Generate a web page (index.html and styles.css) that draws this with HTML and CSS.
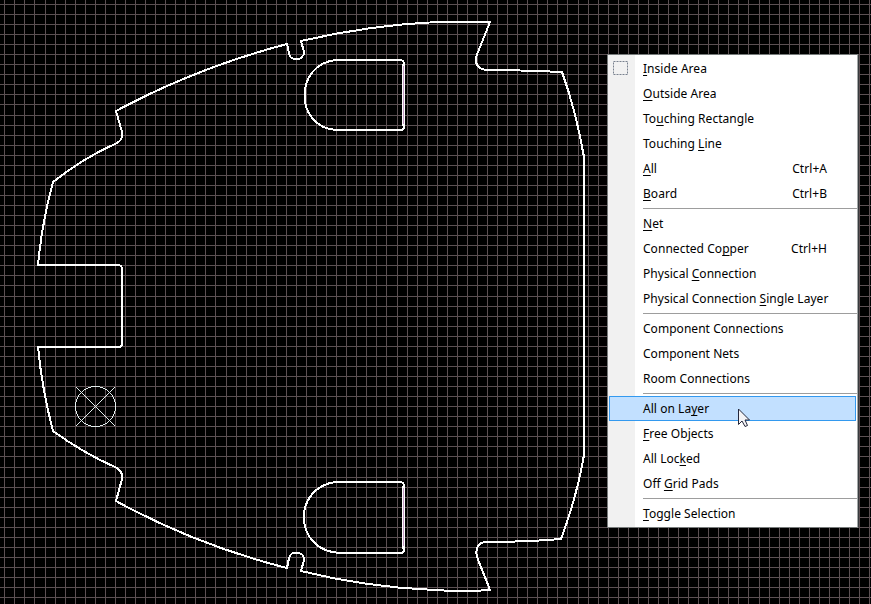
FILE: index.html
```html
<!DOCTYPE html>
<html lang="en">
<head>
<meta charset="utf-8">
<title>PCB Editor</title>
<link rel="stylesheet" href="styles.css">
</head>
<body>
<main class="workspace">
<svg class="board" width="871" height="604" viewBox="0 0 871 604" shape-rendering="crispEdges">
<path id="grid" class="grid"/>
<path class="outline" d="M490 22H437Q370 25 301 41L304 52C304 61 290 62 289 53L287 44Q196 68 116 111L122 132Q123 140 117 143Q83 158 53 182Q42 222 38 265H118Q122 265 122 269V343Q122 347 118 347H38Q42 389 53 431Q83 453 117 468Q123 472 122 479L116 501Q196 545 287 568L289 558C291 550 304 551 304 560L301 571Q365 587 434 590Q465 592 490 590L477 557Q474 543 486 542Q526 542 561 539Q577 496 584 455V157Q576 111 562 72Q521 70 485 70Q474 67 476 57Z"/>
<path class="outline" d="M336 60H400Q404 60 404 64V126Q404 130 400 130H336C294 127 294 64 336 60ZM336 482H400Q404 482 404 486V549Q404 553 400 553H340C293 551 292 487 336 482Z"/>
<path class="slot-edge" d="M402.500 64V126M402.500 486V549"/>
<path class="slot" d="M403.500 66V124M403.500 488V546"/>
<g class="origin"><circle cx="95.500" cy="406.500" r="20"/><path d="M76 387L115 426M115 387L76 426"/></g>
</svg>
<nav class="menu">
<div class="item"><svg class="area" width="15" height="14" viewBox="0 0 15 14"><rect x=".5" y=".5" width="14" height="13"/></svg><span><u>I</u>nside Area</span></div>
<div class="item"><span><u>O</u>utside Area</span></div>
<div class="item"><span>To<u>u</u>ching Rectangle</span></div>
<div class="item"><span>Touching <u>L</u>ine</span></div>
<div class="item"><span><u>A</u>ll</span><kbd>Ctrl+A</kbd></div>
<div class="item"><span><u>B</u>oard</span><kbd>Ctrl+B</kbd></div>
<hr>
<div class="item"><span><u>N</u>et</span></div>
<div class="item"><span>Connected Co<u>p</u>per</span><kbd>Ctrl+H</kbd></div>
<div class="item"><span>Physical <u>C</u>onnection</span></div>
<div class="item"><span>Physical Connection <u>S</u>ingle Layer</span></div>
<hr>
<div class="item"><span>Component Connections</span></div>
<div class="item"><span>Component Nets</span></div>
<div class="item"><span>Room Connections</span></div>
<hr>
<div class="item selected"><span>All on La<u>y</u>er</span></div>
<div class="item"><span><u>F</u>ree Objects</span></div>
<div class="item"><span>All Loc<u>k</u>ed</span></div>
<div class="item"><span>Off <u>G</u>rid Pads</span></div>
<hr>
<div class="item"><span><u>T</u>oggle Selection</span></div>
</nav>
<svg class="pointer" width="13" height="20" viewBox="0 0 13 20"><path d="M.5 1V16.500L4 13L7 18.500L9.500 17.500L7 12H11.500Z"/></svg>
</main>
<script src="grid.js"></script>
</body>
</html>
```
FILE: grid.js
```
const pitch = 10.057;
let lines = "";
for (let i = 0; i < 87; i++) {
  const x = Math.floor(4.78 + i * pitch) + 0.5;
  lines += `M${x} 0V604`;
}
for (let i = 0; i < 60; i++) {
  const y = Math.floor(4.385 + i * pitch) + 0.5;
  lines += `M0 ${y}H871`;
}
document.getElementById("grid").setAttribute("d", lines);
```
FILE: styles.css
```css
* { box-sizing: border-box; }
body { margin: 0; background: #000; overflow: hidden; }
.workspace { position: relative; width: 871px; height: 604px; }
.board { display: block; }
.grid { stroke: #5c5053; fill: none; }
.outline { stroke: #fff; stroke-width: 2; fill: none; }
.slot-edge { stroke: #fff; fill: none; }
.slot { stroke: #c69bc6; fill: none; }
.origin { stroke: #e4eeee; fill: none; }
.menu {
  position: absolute; left: 607px; top: 54px; width: 251px; height: 474px;
  padding: 1px 0; border: 1px solid #777b7b; border-right-color: #a5a8a8;
  background: linear-gradient(90deg, #f1f1f1 27px, #fff 27px);
  font: 12px/25px "Noto Sans", sans-serif; letter-spacing: .04px; color: #000;
  box-shadow: 2px 0 0 -1px #383b3e;
}
.item {
  position: relative; display: flex; justify-content: space-between;
  height: 25px; padding: 0 30px 0 35px; white-space: pre;
}
.item u { text-decoration-thickness: 1px; text-underline-offset: 2px; text-decoration-skip-ink: none; }
kbd { font: inherit; }
hr { height: 1px; margin: 2px 0 2px 35px; border: 0; background: #9d9d9d; }
.selected { margin: 0 1px; padding-left: 34px; background: #c2e0ff; }
.selected::before { content: ""; position: absolute; inset: 0; border: 1px solid #3399ef; }
.area { position: absolute; left: 5px; top: 5px; }
.area rect { fill: none; stroke: #78818e; stroke-dasharray: 2 1; }
.pointer { position: absolute; left: 738px; top: 408px; }
.pointer path { fill: #f4f4f6; stroke: #25283c; }
```
